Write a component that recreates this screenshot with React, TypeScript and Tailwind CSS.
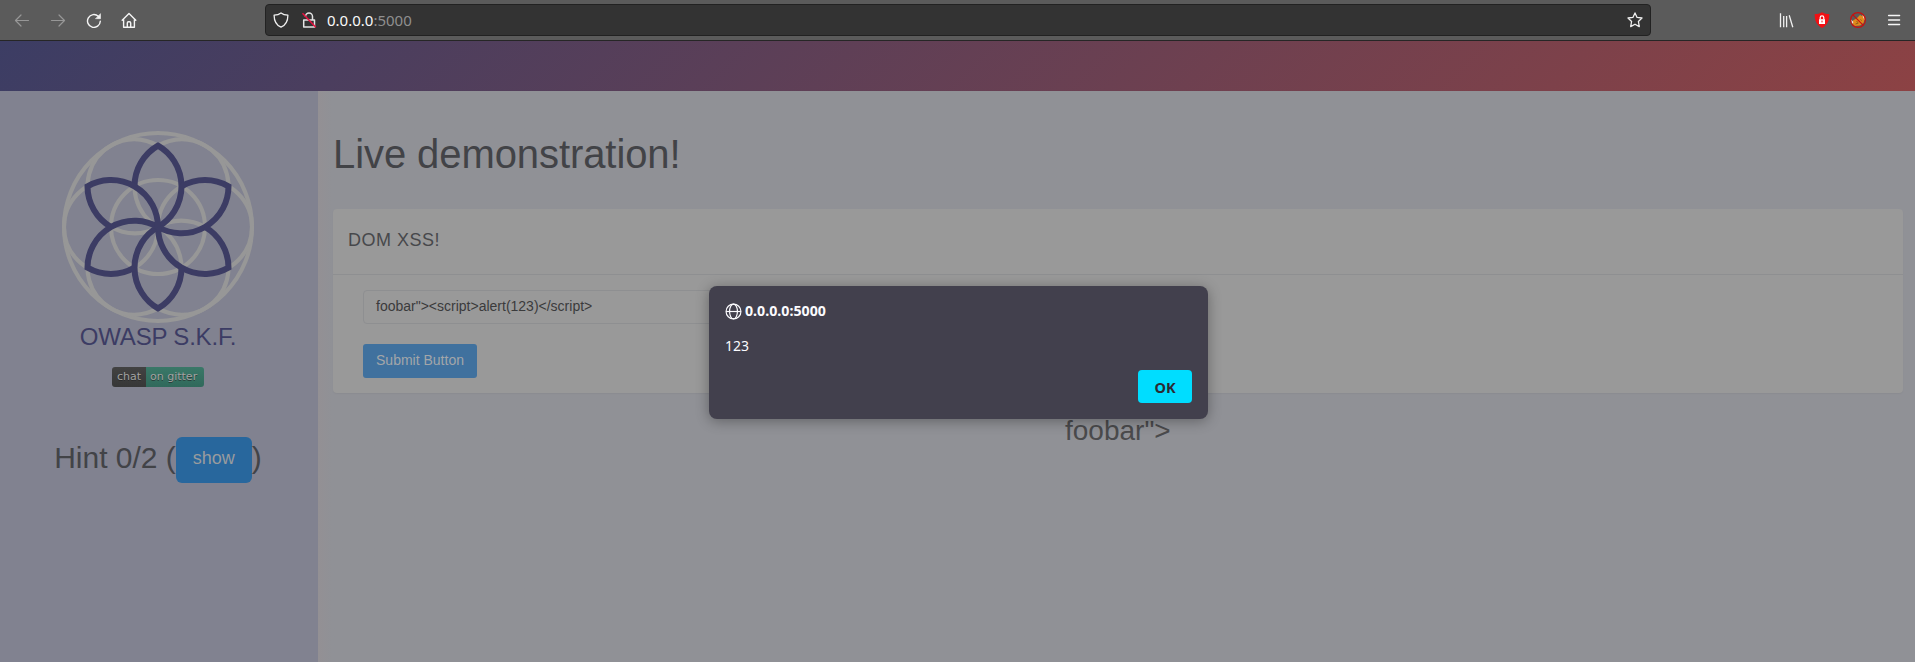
import React from "react";

const PETALS = [0, 60, 120, 180, 240, 300];

function Logo() {
  return (
    <svg className="block h-[196px] w-[196px]" viewBox="-98 -98 196 196" fill="none">
      <g stroke="#979797" strokeWidth="4.1">
        <circle r="94" />
        <circle r="47" />
        {PETALS.map((a) => (
          <circle key={a} cx="47" r="47" transform={`rotate(${a})`} />
        ))}
      </g>
      <g stroke="#3c3c64" strokeWidth="6">
        {PETALS.map((a) => (
          <path
            key={a}
            d="M-23.5-40.7A47 47 0 0 1 0-81.4A47 47 0 0 1 0 0"
            transform={`rotate(${a})`}
          />
        ))}
      </g>
    </svg>
  );
}

function Toolbar() {
  return (
    <header className="flex h-[41px] shrink-0 items-center border-b border-[#262626] bg-[#5b5b5b] font-['Noto_Sans',sans-serif]">
      <nav className="flex w-[265px] items-center gap-5 pl-[14px] text-[#f4f4f4]">
        <svg className="size-4 text-[#979797]" viewBox="0 0 16 16" fill="none" stroke="currentColor" strokeWidth="1.2" strokeLinecap="round" strokeLinejoin="round">
          <path d="M14.5 8.5H1.5M7 3 1.500 8.500 7 14" />
        </svg>
        <svg className="size-4 text-[#979797]" viewBox="0 0 16 16" fill="none" stroke="currentColor" strokeWidth="1.2" strokeLinecap="round" strokeLinejoin="round">
          <path d="M1.500 8.500h13M9 3l5.500 5.500L9 14" />
        </svg>
        <svg className="size-4" viewBox="0 0 16 16" fill="none" stroke="currentColor" strokeWidth="1.400" strokeLinecap="round" strokeLinejoin="round">
          <path d="M14.300 9.200a6.400 6.400 0 1 1-2-4.900" />
          <path d="M14.500 2v4.700H9.800Z" fill="currentColor" strokeWidth=".6" />
        </svg>
        <svg className="-ml-px size-4" viewBox="0 0 16 16" fill="none" stroke="currentColor" strokeWidth="1.400" strokeLinecap="round" strokeLinejoin="round">
          <path d="M1.200 8.300 8 1.400l6.800 6.900M2.600 7.400v7.900h10.800V7.400M6.300 15v-4c0-.8.500-1.200 1.200-1.200h1c.7 0 1.200.4 1.200 1.200v4" />
        </svg>
      </nav>
      <div className="mb-px flex h-8 w-[1386px] items-center rounded border border-[#222] bg-[#333] pr-[7px] pl-[7px]">
        <svg className="size-4 text-[#f0f0f0]" viewBox="0 0 16 16" fill="none" stroke="currentColor" strokeWidth="1.300" strokeLinejoin="round">
          <path d="M8 .9c2 1.500 4.400 2.100 6.900 2.300 0 5.200-2 9.800-6.900 12-4.900-2.200-6.900-6.800-6.900-12C3.600 3 6 2.400 8 .9Z" />
        </svg>
        <svg className="ml-3 size-4 text-[#e4e4e4]" viewBox="0 0 16 16" fill="none" stroke="currentColor" strokeWidth="1.500" strokeLinejoin="round">
          <path d="M4.500 5V4.500a3.500 3.500 0 0 1 7 0V8M2.700 8h10.800v6.900H2.700Z" />
          <path d="M1.500 1.300 14.800 15.200" stroke="#e8103f" strokeWidth="1.500" />
        </svg>
        <span className="ml-[10px] text-[15px] leading-5 text-[#8f8f8f]">
          <span className="text-[#fafafa]">0.0.0.0</span>:5000
        </span>
        <svg className="ml-auto size-4 text-[#f0f0f0]" viewBox="0 0 16 16" fill="none" stroke="currentColor" strokeWidth="1.300" strokeLinejoin="round">
          <path d="m8 .9 2.100 4.500 4.900.6-3.600 3.500.9 5.100L8 12.200l-4.300 2.400.9-5.100L1 6l4.900-.6Z" />
        </svg>
      </div>
      <div className="ml-auto flex items-center gap-5 pr-[13px]">
        <svg className="size-4 text-[#efefef]" viewBox="0 0 16 16" fill="none" stroke="currentColor" strokeWidth="1.300">
          <path d="M2.500 1.200v14M5.700 4v11.200M8.600 4v11.200M11.200 3.200l3.600 12" />
        </svg>
        <svg className="size-4" viewBox="0 0 16 16">
          <path d="M8 .2c2.200 1.300 4.500 1.800 7.300 1.800 0 6-1.300 11-7.300 13.900C2 13 .7 8 .7 2 3.500 2 5.800 1.500 8 .2Z" fill="#f01014" />
          <rect x="5" y="7.200" width="6" height="4.800" fill="#fff" />
          <path d="M6.200 7.200V5.600a1.800 1.800 0 0 1 3.600 0v1.600" fill="none" stroke="#fff" strokeWidth="1.200" />
          <path d="M8 8.600v1.800" stroke="#ed1014" />
        </svg>
        <svg className="size-4" viewBox="0 0 16 16" fill="none">
          <path d="M3 8.500 7 6l3-3 2 1 2-1 1 3-1.500 5-3.500 2.500-5.500.5-2-2.500Z" fill="#e08a1c" />
          <path d="M1 7.500 3.500 10 2 12ZM12.500 2.500l2 2.500v3l-1.500-3Z" fill="#f2e9e0" />
          <path d="m6.500 9.500 1.500.8M10.500 7.500l1.200 1M5.500 12l3-1" stroke="#8a5a18" strokeWidth="1" />
          <circle cx="8" cy="8" r="7.400" stroke="#c8100f" strokeWidth="1.200" />
          <path d="m2.900 2.900 10.200 10.200" stroke="#c8100f" strokeWidth="1.200" />
        </svg>
        <svg className="size-4 text-[#f6f6f6]" viewBox="0 0 16 16" stroke="currentColor" strokeWidth="1.400" strokeLinecap="round">
          <path d="M2.600 3.500h11M2.600 8h11M2.600 12.500h11" />
        </svg>
      </div>
    </header>
  );
}

function Sidebar() {
  return (
    <aside className="flex w-[318px] shrink-0 flex-col items-center bg-[#818290] pt-[38px] pr-[2px]">
      <Logo />
      <div className="-mt-[2px] h-7 text-2xl leading-7 tracking-[-0.200px] text-[#3c3c64]">OWASP S.K.F.</div>
      <div className="mt-4 flex h-5 w-[92px] overflow-hidden rounded-[3px] font-['DejaVu_Sans',sans-serif] text-[11px] leading-5 text-[#a2a2a2] [text-shadow:0_1px_0_#222a]">
        <span className="w-[34px] bg-linear-to-b from-[#424242] to-[#373737] pl-[5px]">chat</span>
        <span className="flex-1 bg-linear-to-b from-[#3a7868] to-[#30695b] pl-1">on gitter</span>
      </div>
      <div className="mt-[50px] flex h-[46px] items-center text-[30px] whitespace-pre text-[#424347]">
        <span className="-mt-1 leading-9">Hint 0/2 (</span>
        <button className="h-[46px] w-[76px] rounded-md bg-[#28679d] pb-1 text-lg leading-6 text-[#999b9e]">show</button>
        <span className="-mt-1 leading-9">)</span>
      </div>
    </aside>
  );
}

function Content() {
  return (
    <main className="flex-1 bg-linear-to-r from-[#939094] to-[#909196] to-[14px] pt-[41px] pr-3 pl-[15px]">
      <h1 className="text-[40px] leading-[44px] tracking-[-0.080px] text-[#424347]">Live demonstration!</h1>
      <section className="mt-[33px] h-[184px] rounded bg-[#999] shadow-[0_1px_1px_#8b8c91]">
        <div className="h-[66px] border-b border-[#8e8f91] pt-[19px] pl-[15px] text-lg leading-6 tracking-[0.500px] text-[#47484b]">
          DOM XSS!
        </div>
        <div className="flex flex-col items-start gap-5 pt-[15px] pl-[30px] text-sm leading-5">
          <div className="h-[34px] w-[610px] rounded border border-[#8e8f91] pt-[5px] pl-3 text-[#3b3b3c]">
            {'foobar"><script>alert(123)</script>'}
          </div>
          <button className="h-[34px] w-[114px] rounded-[3px] bg-[#40719e] pb-[2px] text-[#a3a6a9]">Submit Button</button>
        </div>
      </section>
      <div className="mt-[22px] pl-[732px] text-[28px] leading-8 text-[#4a4a4c]">foobar"&gt;</div>
    </main>
  );
}

function AlertDialog() {
  return (
    <div
      role="alertdialog"
      className="absolute top-[286px] left-[709px] flex h-[133px] w-[499px] flex-col rounded-lg bg-[#42404d] px-4 py-4 font-['Noto_Sans',sans-serif] text-sm leading-5 text-[#fbfbfe] shadow-[0_2px_14px_#0005]"
    >
      <div className="flex h-[18px] items-center gap-[3px] text-[14.200px] font-bold">
        <svg className="size-[17px]" viewBox="0 0 16 16" fill="none" stroke="currentColor" strokeWidth="1.100">
          <circle cx="8" cy="8" r="7" />
          <ellipse cx="8" cy="8" rx="3.700" ry="7" />
          <path d="M1 8h14" />
        </svg>
        0.0.0.0:5000
      </div>
      <div className="mt-4">123</div>
      <button className="mt-[14px] h-[33px] w-[54px] shrink-0 self-end rounded bg-[#00ddff] text-[14.500px] font-bold text-[#2b2a33]">OK</button>
    </div>
  );
}

export default function App() {
  return (
    <div className="relative flex h-[662px] w-full flex-col overflow-hidden font-['Liberation_Sans',sans-serif]">
      <Toolbar />
      <div className="h-[50px] shrink-0 bg-[linear-gradient(135deg,#3c3d64_0%,#8c4244_100%)]" />
      <div className="flex flex-1">
        <Sidebar />
        <Content />
      </div>
      <AlertDialog />
    </div>
  );
}
